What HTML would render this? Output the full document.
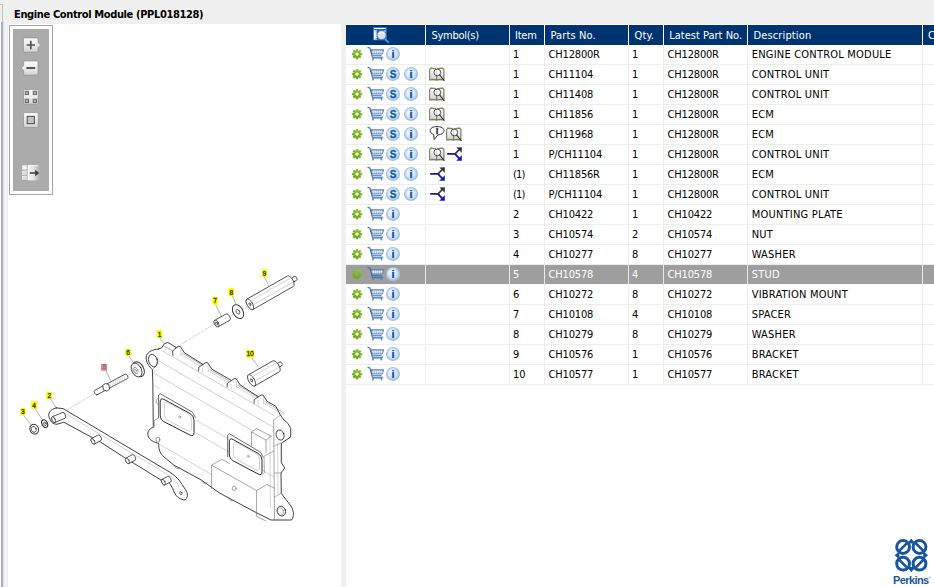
<!DOCTYPE html>
<html lang="en"><head><meta charset="utf-8"><title>Engine Control Module (PPL018128)</title>
<style>
html,body{margin:0;padding:0}
body{width:934px;height:587px;overflow:hidden;background:#f0f0f0;position:relative;font-family:"DejaVu Sans Condensed","Liberation Sans",sans-serif;font-size:11px;font-stretch:condensed;color:#000}
.defs{position:absolute;width:0;height:0;overflow:hidden}
.edge{position:absolute;left:0;top:21px;width:4px;height:566px;background:linear-gradient(to right,#fff 0,#fff 1.5px,#a9abc8 1.5px,#a9abc8 2.7px,#e2e3ef 2.7px,#e2e3ef 4px)}
.edge .tab{position:absolute;left:0;top:-17px;width:2px;height:17px;background:#f1f0e6;border-top:1px solid #c4c4c4;border-right:1px solid #c0c0c0}
.edge .vline{display:none}
.title{position:absolute;left:14px;top:8px;height:14px;line-height:14px;font-family:"DejaVu Sans Condensed","Liberation Sans",sans-serif;font-weight:bold;font-size:11px;letter-spacing:-0.37px;white-space:nowrap}
.left{position:absolute;left:8px;top:24px;width:333px;height:563px;background:#fff;overflow:hidden}
.right{position:absolute;left:346px;top:24px;width:588px;height:563px;background:#fff;overflow:hidden}
.thead{position:absolute;left:0;top:1px;width:588px;height:20px;background:#fff}
.th{position:absolute;top:0;height:20px;line-height:21px;background:#003471;color:#fff;white-space:nowrap;box-sizing:border-box;padding-left:5px;overflow:hidden}
.tr{position:absolute;left:0;width:588px;height:20px}
.td{position:absolute;top:0;height:19px;line-height:19px;white-space:nowrap;box-sizing:border-box;padding-left:3px;border-bottom:1px solid #ededed;height:20px;overflow:hidden}
.tr.sel .td{background:#9e9e9e;color:#fff;border-bottom-color:#fafafa}
.tr.sel{background:#e9e9e9}
.tr{background:#ededed}
.td{background:#fff}
.c0{left:0;width:79px}
.c1{left:80px;width:83px}
.c2{left:164px;width:34px}
.c3{left:199px;width:83px}
.c4{left:283px;width:34px}
.c5{left:318px;width:83px}
.c6{left:402px;width:174px}
.c7{left:577px;width:11px}
.ic{position:absolute;overflow:visible}
.hic{left:26px;top:1px}
.gear{left:5px;top:3px}
.cart{left:20.6px;top:1px}
.r1{left:39px;top:1px;opacity:0.999}
.r2{left:57px;top:1px;opacity:0.999}
.ts{font-family:"Liberation Sans",sans-serif;font-weight:bold;font-size:10px;fill:#0d5a9b;stroke:#0d5a9b;stroke-width:0.3px;text-anchor:middle}
.ti{font-family:"Liberation Sans",sans-serif;font-weight:bold;font-size:10.5px;fill:#2457a6;text-anchor:middle}
.tn{font-family:"Liberation Sans",sans-serif;font-weight:bold;font-size:9.6px;fill:#2a2a2a;stroke:#2a2a2a;stroke-width:0.4px;text-anchor:middle}
.tbframe{position:absolute;left:1px;top:1px;width:42px;height:168px;border:1px solid #a3a3a3;background:#fff}
.tbin{position:absolute;left:3px;top:3px;width:36px;height:162px;background:#ababab}
.tbsvg{position:absolute;left:0;top:0}
.dg{position:absolute;left:0;top:0}
.lb{font-family:"Liberation Sans",sans-serif;font-size:6.5px;text-anchor:middle;stroke-width:0.35px}
.logo{position:absolute;left:528px;top:503px}
.pk{font-family:"Liberation Sans",sans-serif;font-weight:bold;font-size:11px;letter-spacing:-0.6px;fill:#17569f}
.pkr{font-family:"Liberation Sans",sans-serif;font-size:3px;fill:#1a5aa2}
.th.c1{letter-spacing:-0.27px;padding-left:5.5px}
.th.c2{letter-spacing:-0.22px}
.th.c3{letter-spacing:0.12px;padding-left:5.5px}
.th.c4{letter-spacing:0.12px;padding-left:5.5px}
.th.c5{padding-left:5.3px}
.th.c6{letter-spacing:0.13px;padding-left:5.5px}
.td.c3,.td.c5{letter-spacing:-0.19px;padding-left:3.6px}
.td.c6{letter-spacing:0.21px;padding-left:3.7px}
.par{letter-spacing:-0.8px}
</style></head>
<body>
<svg class="defs" width="0" height="0" aria-hidden="true"><defs>
<radialGradient id="g-ball" cx="0.5" cy="0.5" r="0.5" fx="0.4" fy="0.36"><stop offset="0" stop-color="#f3f8fc"/><stop offset="0.5" stop-color="#dfebf7"/><stop offset="0.78" stop-color="#bcd6ef"/><stop offset="0.92" stop-color="#8fbbe3"/><stop offset="1" stop-color="#b7d2ec"/></radialGradient>
<linearGradient id="g-gear" gradientUnits="userSpaceOnUse" x1="0" y1="-5" x2="0" y2="5"><stop offset="0" stop-color="#8fc53a"/><stop offset="1" stop-color="#6da11b"/></linearGradient>
<linearGradient id="g-page" x1="0" y1="0" x2="0" y2="1"><stop offset="0" stop-color="#ffffff"/><stop offset="1" stop-color="#cfcfcf"/></linearGradient>
<symbol id="i-ball" viewBox="0 0 16 16"><circle cx="8" cy="8" r="7.05" fill="url(#g-ball)"/></symbol>
<symbol id="i-gear" viewBox="0 0 13 12"><g transform="translate(6 6.1)"><g fill="url(#g-gear)"><rect x="-1.2" y="-5.15" width="2.4" height="2.6" rx="0.45"/><rect x="-1.2" y="2.55" width="2.4" height="2.6" rx="0.45"/><rect x="-5.15" y="-1.2" width="2.6" height="2.4" rx="0.45"/><rect x="2.55" y="-1.2" width="2.6" height="2.4" rx="0.45"/><g transform="rotate(45)"><rect x="-1.2" y="-5.15" width="2.4" height="2.6" rx="0.45"/><rect x="-1.2" y="2.55" width="2.4" height="2.6" rx="0.45"/><rect x="-5.15" y="-1.2" width="2.6" height="2.4" rx="0.45"/><rect x="2.55" y="-1.2" width="2.6" height="2.4" rx="0.45"/></g></g><circle r="2.65" fill="none" stroke="url(#g-gear)" stroke-width="2.1"/></g></symbol>
<symbol id="i-cart" viewBox="0 0 18 16"><polygon points="3.5,3.7 16.8,3.7 15.3,8 4.9,8" fill="#86a2cc" stroke="#4a74ad" stroke-width="0.75" stroke-linejoin="round"/><path d="M6.3 4.3V7.6M8.3 4.3V7.6M10.3 4.3V7.6M12.3 4.3V7.6M14.3 4.3V7.6M4.4 5.9H16" stroke="#f2f6fb" stroke-width="0.8" fill="none"/><path d="M1 1.4 L2.9 2 L5.4 11.3 L15.7 11.3" fill="none" stroke="#3b66a0" stroke-width="1.05" stroke-linecap="round" stroke-linejoin="round"/><path d="M5.4 9.6 H14.6" stroke="#3b66a0" stroke-width="0.8" fill="none"/><path d="M6 12.3 H14.6" stroke="#4a8fe0" stroke-width="0.8" fill="none"/><path d="M5.6 11.4 L5.9 12.8 M15 11.4 L14.5 12.8" stroke="#3b66a0" stroke-width="0.9" fill="none"/><circle cx="5.9" cy="13.5" r="0.95" fill="#4a8fe0"/><circle cx="14.4" cy="13.5" r="0.95" fill="#4a8fe0"/></symbol>
<symbol id="i-book" viewBox="0 0 18 17"><path d="M1.1 3.2 L2.6 1.3 L7.6 1.9 L8.7 3 L9.8 1.9 L14.9 1.3 L16.4 3.2 L16.4 14.6 L1.1 14.6 Z" fill="#a09e62"/><path d="M1.7 3.3 C3.6 2 6.6 2.1 8.7 3.6 L8.7 14.1 C6.6 13.1 3.6 13.1 1.7 13.9 Z" fill="url(#g-page)" stroke="#55554a" stroke-width="0.65"/><path d="M8.7 3.6 C10.8 2.1 13.8 2 15.8 3.3 L15.8 13.9 C13.8 13.1 10.8 13.1 8.7 14.1 Z" fill="url(#g-page)" stroke="#55554a" stroke-width="0.65"/><circle cx="9.3" cy="6.4" r="3.4" fill="#fff" fill-opacity="0.7" stroke="#3a3a3a" stroke-width="0.9"/><path d="M11.7 9 L16.1 14.5" stroke="#2a2a2a" stroke-width="1.15" stroke-linecap="round"/></symbol>
<symbol id="i-note" viewBox="0 0 17 17"><path d="M9 1.5 C5 1.5 2.1 3.2 2.1 5.6 C2.1 7.3 3.5 8.7 5.6 9.4 L6.2 14.6 L9.8 9.9 C13.4 9.7 16 7.9 16 5.6 C16 3.2 13 1.5 9 1.5 Z" fill="#fff" stroke="#33332a" stroke-width="1" stroke-linejoin="round"/></symbol>
<symbol id="i-split" viewBox="0 0 18 17"><path d="M1.2 7.9 H9.2" stroke="#15186e" stroke-width="1.7" fill="none"/><path d="M9 8 L13.6 3.2" stroke="#3a3a3a" stroke-width="1.8" fill="none"/><path d="M10.4 1.4 L15.8 1.2 L15.8 6.7 Z" fill="#333"/><path d="M9 7.8 L13.6 12.8" stroke="#15188e" stroke-width="1.8" fill="none"/><path d="M15.8 9.2 L15.8 14.8 L10.2 14.8 Z" fill="#0a18dc"/></symbol>
<symbol id="i-find" viewBox="0 0 18 18"><rect x="1.5" y="1.6" width="12.7" height="12.2" fill="#1f64b4" stroke="#2f7fd0" stroke-width="0.9"/><path d="M2 2.5 H13.7" stroke="#ffffff" stroke-width="1"/><rect x="2" y="4.2" width="2.9" height="9.4" fill="#fff"/><path d="M4.2 4.8 V13.4" stroke="#2a6fc0" stroke-width="1.1" stroke-dasharray="0.9 0.9"/><rect x="12.2" y="4.4" width="1.4" height="1.5" fill="#f4f8fd"/><circle cx="9.6" cy="9.1" r="4.5" fill="#dcdfe4" stroke="#2c72c4" stroke-width="0.6"/><path d="M6.8 8 C8.2 6.2 11 6.2 12.4 8" stroke="#f6f7f9" stroke-width="1.4" fill="none"/><path d="M12.9 13.2 L16.3 16.2" stroke="#3f7fd0" stroke-width="2.1" stroke-linecap="round"/><path d="M13.4 13 L16.4 15.6" stroke="#cfe0f5" stroke-width="0.6" stroke-dasharray="0.8 0.8"/></symbol>
</defs></svg>
<div class="edge"><div class="tab"></div><div class="vline"></div></div>
<div class="title">Engine Control Module (PPL018128)</div>
<div class="left">
<div class="tbframe"><div class="tbin"></div></div>
<svg class="tbsvg" width="60" height="180" viewBox="8 24 60 180">
<defs><linearGradient id="g-btn" x1="0" y1="0" x2="0" y2="1"><stop offset="0" stop-color="#fbfbfb"/><stop offset="0.5" stop-color="#ececec"/><stop offset="1" stop-color="#d2d2d2"/></linearGradient>
<linearGradient id="g-exp" x1="0" y1="0" x2="1" y2="0"><stop offset="0" stop-color="#f4f4f4"/><stop offset="0.45" stop-color="#e6e6e6"/><stop offset="1" stop-color="#ababab"/></linearGradient></defs>
<g stroke="#8e8e8e" stroke-width="0.7">
<path d="M24.4 37.9 H37 a1 1 0 0 1 1 1 V42.4 L40.6 45 L38 47.6 V51.1 a1 1 0 0 1 -1 1 H24.4 a1 1 0 0 1 -1 -1 V38.9 a1 1 0 0 1 1 -1 Z" fill="url(#g-btn)"/>
<path d="M37 61 H24.6 a1 1 0 0 0 -1 1 V65.4 L21.2 68 L23.6 70.6 V74.1 a1 1 0 0 0 1 1 H37 a1 1 0 0 0 1 -1 V62 a1 1 0 0 0 -1 -1 Z" fill="url(#g-btn)"/>
<rect x="23.6" y="89.4" width="14.6" height="14.8" rx="1" fill="url(#g-btn)"/>
<rect x="23.6" y="112.6" width="14.6" height="14.8" rx="1" fill="url(#g-btn)"/>
</g>
<path d="M26.6 45 H35 M30.8 40.8 V49.2" stroke="#505050" stroke-width="1.7" fill="none"/>
<path d="M26.4 68 H35.2" stroke="#505050" stroke-width="1.9" fill="none"/>
<g fill="#a9a9a9" stroke="#636363" stroke-width="0.9"><rect x="25.2" y="91.2" width="3.4" height="3.4"/><rect x="33.2" y="91.2" width="3.4" height="3.4"/><rect x="25.2" y="99.2" width="3.4" height="3.4"/><rect x="33.2" y="99.2" width="3.4" height="3.4"/></g>
<rect x="27.2" y="116.4" width="7.2" height="7.2" fill="#c4c4c4" stroke="#555" stroke-width="1.1"/>
<rect x="27.6" y="165.2" width="12.4" height="15.2" fill="url(#g-exp)"/>
<rect x="22" y="165.2" width="5.6" height="15.2" fill="#8f8f8f"/>
<g fill="#dcdcdc"><rect x="22.6" y="165.6" width="4.3" height="4.2"/><rect x="22.6" y="170.9" width="4.3" height="4.1"/><rect x="22.6" y="176" width="4.3" height="4.1"/></g>
<rect x="23.2" y="166.2" width="3.1" height="3" fill="#fbfbfb"/>
<path d="M22.5 169.8 V165.6 H26.9 M22.5 175 V170.9 H26.9 M22.5 180.1 V176 H26.9" stroke="#fff" stroke-width="0.7" fill="none"/>
<path d="M28 180.2 V165.6 H38" stroke="#fdfdfd" stroke-width="0.9" fill="none"/>
<path d="M29.8 173 H36.4" stroke="#3d3d3d" stroke-width="1.5" fill="none"/><path d="M35.2 169.8 L39.2 173 L35.2 176.2 Z" fill="#3d3d3d"/>
</svg>
<svg class="dg" width="333" height="563" viewBox="8 24 333 563">
<g stroke-linecap="round" stroke-linejoin="round">
<path d="M213 325 L181 344.4" stroke="#a8a8a8" stroke-width="0.5" fill="none" stroke-dasharray="9 2 2 2"/>
<path d="M230.5 316 L233.5 314.2 M242.5 309 L247 306.4" stroke="#a8a8a8" stroke-width="0.5" fill="none"/>
<path d="M143 366 L151 361.5" stroke="#a8a8a8" stroke-width="0.5" fill="none"/>
<path d="M127.5 375.6 L131.5 373.2" stroke="#a8a8a8" stroke-width="0.5" fill="none"/>
<path d="M94 393.6 L67.2 410" stroke="#a8a8a8" stroke-width="0.5" fill="none" stroke-dasharray="9 2 2 2"/>
<path d="M38.5 427 L41.5 425.3 M47.5 422.2 L50 420.8" stroke="#a8a8a8" stroke-width="0.5" fill="none"/>
<path d="M246.5 383 L241 386.4" stroke="#a8a8a8" stroke-width="0.5" fill="none"/>
<path d="M160 338 L164.5 343.8" stroke="#6a6a6a" stroke-width="0.5" fill="none"/>
<path d="M50.5 398.7 L56.3 407.9" stroke="#6a6a6a" stroke-width="0.5" fill="none"/>
<path d="M23.6 415.2 L31 424.6" stroke="#6a6a6a" stroke-width="0.5" fill="none"/>
<path d="M35.2 408.9 L42.6 420" stroke="#6a6a6a" stroke-width="0.5" fill="none"/>
<path d="M105.9 370.6 L110.5 380.3" stroke="#6a6a6a" stroke-width="0.5" fill="none"/>
<path d="M128.9 355.8 L133 362" stroke="#6a6a6a" stroke-width="0.5" fill="none"/>
<path d="M215.6 304.8 L221.4 316.2" stroke="#6a6a6a" stroke-width="0.5" fill="none"/>
<path d="M232.4 296.2 L236.6 305" stroke="#6a6a6a" stroke-width="0.5" fill="none"/>
<path d="M264.7 277.2 L268.3 285.6" stroke="#6a6a6a" stroke-width="0.5" fill="none"/>
<path d="M251.6 357.8 L258.8 367.3" stroke="#6a6a6a" stroke-width="0.5" fill="none"/>
<path d="M158.4 349.1 C152 349.3 146.3 352.6 146.1 357.4 C146 362 149.2 366.6 152.3 369.5 L152.8 381 L153.3 427.4 C150 428.2 147.7 430.6 147.8 434 C148 438.4 152 441.8 157.4 443 L158.7 443.4 C158.6 450 160.2 453.4 164 457 L174 465.2 L201.3 480 L220 493.3 L256.6 512.8 L271 520 L291.5 520 C294.2 517 294.2 511 291 506 L284 497 L281.3 493.3 L281 473 L284.7 468 L281.3 462.6 L281.3 443.2 L290.7 437 L290.7 428.5 C289 424.2 286.2 421.2 283.9 420 L280 414.5 L275.9 406.3 L267.2 401.4 L263.0 395.0 L261.0 395.0 L258.4 396.8 L240.3 385.09999999999997 L236.10000000000002 378.7 L234.10000000000002 378.7 L231.5 380.5 L211.8 369.09999999999997 L207.60000000000002 362.7 L205.60000000000002 362.7 L203.0 364.5 L184.5 352.8 L180.3 346.40000000000003 L178.3 346.40000000000003 L175.7 348.20000000000005 L176.1 347.4 L167.9 342.5 L164.5 343.6 L161.8 347.7 L158.4 349.1 Z" stroke="#2a2a2a" stroke-width="0.9" fill="#fff"/>
<ellipse cx="153" cy="360.6" rx="4.3" ry="6.4" transform="rotate(-18 153 360.6)" stroke="#2a2a2a" stroke-width="0.8" fill="#fff"/>
<ellipse cx="280.1" cy="435" rx="3.9" ry="5.2" transform="rotate(-20 280.1 435)" stroke="#2a2a2a" stroke-width="0.8" fill="#fff"/>
<ellipse cx="281.3" cy="511.1" rx="4.2" ry="5" transform="rotate(-20 281.3 511.1)" stroke="#2a2a2a" stroke-width="0.8" fill="#fff"/>
<ellipse cx="280.6" cy="511.5" rx="2.9" ry="3.7" transform="rotate(-20 280.6 511.5)" stroke="#6a6a6a" stroke-width="0.5" fill="none"/>
<ellipse cx="157.9" cy="439.8" rx="2" ry="2.6" stroke="#6a6a6a" stroke-width="0.7" fill="#fff"/>
<path d="M152.3 369.5 C155 368 157.4 364 157.6 358" stroke="#6a6a6a" stroke-width="0.6" fill="none"/>
<path d="M175.8 348.2 L172.6 351 L172.8 355.4" stroke="#2a2a2a" stroke-width="0.8" fill="none"/>
<path d="M163.8 346.2 L173 350.9" stroke="#6a6a6a" stroke-width="0.55" fill="none"/>
<path d="M180.7 349.1 L180.9 355.3" stroke="#a8a8a8" stroke-width="0.5" fill="none"/>
<path d="M182.2 352.9 L201.8 364.9" stroke="#6a6a6a" stroke-width="0.5" fill="none"/>
<path d="M180.9 354.3 L199.5 365.7" stroke="#a8a8a8" stroke-width="0.5" fill="none"/>
<path d="M203.0 364.5 L198.8 367.2 L198.6 371.0" stroke="#2a2a2a" stroke-width="0.8" fill="none"/>
<path d="M202.6 368.0 L202.8 372.6" stroke="#a8a8a8" stroke-width="0.5" fill="none"/>
<path d="M208.0 365.4 L208.2 371.6" stroke="#a8a8a8" stroke-width="0.5" fill="none"/>
<path d="M209.5 369.2 L229.1 381.2" stroke="#6a6a6a" stroke-width="0.5" fill="none"/>
<path d="M208.2 370.6 L226.8 382.0" stroke="#a8a8a8" stroke-width="0.5" fill="none"/>
<path d="M231.5 380.5 L227.3 383.2 L227.1 387.0" stroke="#2a2a2a" stroke-width="0.8" fill="none"/>
<path d="M231.1 384.0 L231.3 388.6" stroke="#a8a8a8" stroke-width="0.5" fill="none"/>
<path d="M236.5 381.4 L236.7 387.6" stroke="#a8a8a8" stroke-width="0.5" fill="none"/>
<path d="M238.0 385.2 L257.6 397.2" stroke="#6a6a6a" stroke-width="0.5" fill="none"/>
<path d="M236.7 386.6 L255.3 398.0" stroke="#a8a8a8" stroke-width="0.5" fill="none"/>
<path d="M258.4 396.8 L254.2 399.5 L254.0 403.3" stroke="#2a2a2a" stroke-width="0.8" fill="none"/>
<path d="M258.0 400.3 L258.2 404.9" stroke="#a8a8a8" stroke-width="0.5" fill="none"/>
<path d="M263.4 397.7 L263.6 403.9" stroke="#a8a8a8" stroke-width="0.5" fill="none"/>
<path d="M264.9 401.5 L284.5 413.5" stroke="#6a6a6a" stroke-width="0.5" fill="none"/>
<path d="M263.6 402.9 L282.2 414.3" stroke="#a8a8a8" stroke-width="0.5" fill="none"/>
<path d="M161.8 350.6 L273.4 415.2" stroke="#a8a8a8" stroke-width="0.55" fill="none"/>
<path d="M158.4 360.7 L273.6 427.4" stroke="#a8a8a8" stroke-width="0.55" fill="none"/>
<path d="M153.6 372.9 L252 430.4" stroke="#a8a8a8" stroke-width="0.55" fill="none"/>
<path d="M153.4 385 L160 389" stroke="#a8a8a8" stroke-width="0.5" fill="none"/>
<path d="M196 420 L229 439.2" stroke="#a8a8a8" stroke-width="0.5" fill="none"/>
<path d="M196 433 L229.4 452.4" stroke="#a8a8a8" stroke-width="0.5" fill="none"/>
<path d="M158.9 444 L211.6 474.6" stroke="#a8a8a8" stroke-width="0.5" fill="none"/>
<path d="M262 470 L274 477" stroke="#a8a8a8" stroke-width="0.5" fill="none"/>
<path d="M273.7 420 L274.5 519.6" stroke="#6a6a6a" stroke-width="0.6" fill="none"/>
<path d="M277.6 444 L278 494" stroke="#a8a8a8" stroke-width="0.5" fill="none"/>
<path d="M270 436 L270.4 508" stroke="#a8a8a8" stroke-width="0.45" fill="none"/>
<path d="M273.7 420 L281 414.8" stroke="#6a6a6a" stroke-width="0.5" fill="none"/>
<path d="M273.9 446 L281.3 443.2" stroke="#6a6a6a" stroke-width="0.5" fill="none"/>
<path d="M274.3 497 L281.3 493.3 M274.3 473 L281 473" stroke="#6a6a6a" stroke-width="0.5" fill="none"/>
<path d="M251.5 445.6 L251.5 431.9 L256.6 428.5 L271.1 436.2 M251.5 431.9 L266 440.2 L271.1 436.2 M266 440.2 L266 452" stroke="#6a6a6a" stroke-width="0.6" fill="none"/>
<path d="M211.6 488.6 L211.6 465.2 L221.8 459.2 L229.4 463.4 M211.6 465.2 L256.6 490.6 L256.6 512.8 M256.6 490.6 L267 484.5 L274.2 488" stroke="#6a6a6a" stroke-width="0.6" fill="none"/>
<path d="M174.8 465.6 C174.6 468.4 178.8 469.8 180 467.6" stroke="#6a6a6a" stroke-width="0.6" fill="none"/>
<path d="M201.8 480.4 C201.6 483.2 205.8 484.6 207 482.4" stroke="#6a6a6a" stroke-width="0.6" fill="none"/>
<path d="M229 497.8 C228.8 500.6 233 502 234.2 499.8" stroke="#6a6a6a" stroke-width="0.6" fill="none"/>
<ellipse cx="234.2" cy="488.4" rx="1.9" ry="2.3" stroke="#6a6a6a" stroke-width="0.6" fill="#fff"/>
<path d="M256.6 512.8 L256.6 516.4 L266 521" stroke="#6a6a6a" stroke-width="0.6" fill="none"/>
<path d="M160.2 401.9 Q160.2 397.3 164.2 399.5 L190.0 413.5 Q194.0 415.7 194.0 420.3 L194.0 432.5 Q194.0 437.1 189.9 435.0 L164.3 421.9 Q160.2 419.8 160.2 415.2 Z" stroke="#2a2a2a" stroke-width="1.0" fill="#fff"/>
<path d="M164.4 404.9 Q164.4 400.7 168.0 402.7 L187.8 413.5 Q191.4 415.5 191.4 419.6 L191.4 428.4 Q191.4 432.6 187.7 430.7 L168.1 420.6 Q164.4 418.7 164.4 414.6 Z" stroke="#a8a8a8" stroke-width="0.55" fill="none"/>
<circle cx="179.7" cy="416.9" r="1.1" stroke="#6a6a6a" stroke-width="0.5" fill="none"/>
<path d="M158.6 417.8 L158.6 395.1 L160.2 393.7 L192.6 412.3 L195.2 417.3" stroke="#2a2a2a" stroke-width="0.7" fill="none"/>
<path d="M229.3 441.9 Q229.3 437.3 233.3 439.6 L258.0 453.4 Q262.0 455.7 262.0 460.3 L262.0 471.5 Q262.0 476.1 257.9 473.9 L233.4 460.9 Q229.3 458.7 229.3 454.1 Z" stroke="#2a2a2a" stroke-width="1.0" fill="#fff"/>
<path d="M233.4 444.8 Q233.4 440.6 237.0 442.7 L255.9 453.3 Q259.5 455.3 259.5 459.5 L259.5 467.5 Q259.5 471.7 255.9 469.7 L237.0 459.7 Q233.4 457.7 233.4 453.6 Z" stroke="#a8a8a8" stroke-width="0.55" fill="none"/>
<circle cx="248.2" cy="456.3" r="1.1" stroke="#6a6a6a" stroke-width="0.5" fill="none"/>
<path d="M227.7 456.7 L227.7 435.1 L229.3 433.7 L260.6 452.3 L263.2 457.3" stroke="#2a2a2a" stroke-width="0.7" fill="none"/>
<path d="M158.6 417.8 L154.4 420.4 L154.2 427" stroke="#6a6a6a" stroke-width="0.6" fill="none"/>
<path d="M158.4 398.4 C155.4 398.4 155 404 158.4 404.6" stroke="#6a6a6a" stroke-width="0.6" fill="none"/>
<path d="M261.7 474.5 L264.4 473 L264 456.4 L273.8 451" stroke="#6a6a6a" stroke-width="0.55" fill="none"/>
<path d="M294.5 281.5 L296.7 280.2 A1.32 2.20 -30.6 0 0 294.5 276.4 L292.3 277.7 A1.32 2.20 -30.6 0 0 294.5 281.5 Z" stroke="#2a2a2a" stroke-width="0.8" fill="#fff"/>
<path d="M252.9 309.5 L293.4 286.4 A2.70 6.00 -29.7 0 0 287.4 276.0 L246.9 299.1 A2.70 6.00 -29.7 0 0 252.9 309.5 Z" stroke="#2a2a2a" stroke-width="0.8" fill="#fff"/>
<ellipse cx="249.9" cy="304.3" rx="2.70" ry="6.00" transform="rotate(-29.7 249.9 304.3)" stroke="#2a2a2a" stroke-width="0.68" fill="#fff"/>
<ellipse cx="249.9" cy="304.3" rx="0.77" ry="1.70" transform="rotate(-29.7 249.9 304.3)" stroke="#2a2a2a" stroke-width="0.64" fill="#fff"/>
<path d="M250.4 300.9 L290.5 278.1" stroke="#a8a8a8" stroke-width="0.5" fill="none"/>
<path d="M252.8 305.1 L292.8 282.2" stroke="#a8a8a8" stroke-width="0.5" fill="none"/>
<ellipse cx="238" cy="311.6" rx="4.9" ry="7.5" transform="rotate(-30 238 311.6)" stroke="#2a2a2a" stroke-width="0.9" fill="#fff"/>
<ellipse cx="237.9" cy="311.8" rx="1.6" ry="2.5" transform="rotate(-30 237.9 311.8)" stroke="#2a2a2a" stroke-width="0.7" fill="#fff"/>
<path d="M218.3 326.7 L229.8 320.3 A2.04 3.70 -29.1 0 0 226.2 313.9 L214.7 320.3 A2.04 3.70 -29.1 0 0 218.3 326.7 Z" stroke="#2a2a2a" stroke-width="0.8" fill="#fff"/>
<ellipse cx="216.5" cy="323.5" rx="2.04" ry="3.70" transform="rotate(-29.1 216.5 323.5)" stroke="#2a2a2a" stroke-width="0.68" fill="#fff"/>
<ellipse cx="216.5" cy="323.5" rx="0.88" ry="1.60" transform="rotate(-29.1 216.5 323.5)" stroke="#2a2a2a" stroke-width="0.64" fill="#fff"/>
<path d="M280.0 366.6 L282.0 365.5 A1.26 2.10 -28.8 0 0 280.0 361.9 L278.0 363.0 A1.26 2.10 -28.8 0 0 280.0 366.6 Z" stroke="#2a2a2a" stroke-width="0.8" fill="#fff"/>
<path d="M254.8 385.9 L279.5 371.7 A2.88 6.40 -29.9 0 0 273.1 360.7 L248.4 374.9 A2.88 6.40 -29.9 0 0 254.8 385.9 Z" stroke="#2a2a2a" stroke-width="0.8" fill="#fff"/>
<ellipse cx="251.6" cy="380.4" rx="2.88" ry="6.40" transform="rotate(-29.9 251.6 380.4)" stroke="#2a2a2a" stroke-width="0.68" fill="#fff"/>
<ellipse cx="251.6" cy="380.4" rx="0.77" ry="1.70" transform="rotate(-29.9 251.6 380.4)" stroke="#2a2a2a" stroke-width="0.64" fill="#fff"/>
<path d="M252.2 376.8 L276.4 362.8" stroke="#a8a8a8" stroke-width="0.5" fill="none"/>
<path d="M254.7 381.2 L278.9 367.3" stroke="#a8a8a8" stroke-width="0.5" fill="none"/>
<ellipse cx="138.4" cy="369.2" rx="5.2" ry="8" transform="rotate(-28 138.4 369.2)" stroke="#2a2a2a" stroke-width="0.9" fill="#fff"/>
<ellipse cx="136.6" cy="370" rx="4.8" ry="7.4" transform="rotate(-28 136.6 370)" stroke="#2a2a2a" stroke-width="0.8" fill="#fff"/>
<ellipse cx="135.6" cy="370.6" rx="2.3" ry="3.4" transform="rotate(-28 135.6 370.6)" stroke="#6a6a6a" stroke-width="0.6" fill="#fff"/>
<ellipse cx="135.2" cy="370.8" rx="1.1" ry="1.7" transform="rotate(-28 135.2 370.8)" stroke="#6a6a6a" stroke-width="0.5" fill="#fff"/>
<path d="M109.4 388.2 L127.6 378.5 A1.25 2.50 -28.1 0 0 125.2 374.1 L107.0 383.8 A1.25 2.50 -28.1 0 0 109.4 388.2 Z" stroke="#2a2a2a" stroke-width="0.8" fill="#fff"/>
<path d="M97.0 394.8 L105.2 390.4 A1.25 2.50 -28.2 0 0 102.8 386.0 L94.6 390.4 A1.25 2.50 -28.2 0 0 97.0 394.8 Z" stroke="#2a2a2a" stroke-width="0.8" fill="#fff"/>
<path d="M103 385.2 L105.6 383.4 L108.8 384.6 L109.6 389.2 L107 391.2 L103.8 390 Z" stroke="#2a2a2a" stroke-width="0.8" fill="#fff"/>
<path d="M110.0 383.3 L111.2 387.1" stroke="#a8a8a8" stroke-width="0.4" fill="none"/>
<path d="M111.7 382.4 L112.9 386.2" stroke="#a8a8a8" stroke-width="0.4" fill="none"/>
<path d="M113.4 381.5 L114.6 385.3" stroke="#a8a8a8" stroke-width="0.4" fill="none"/>
<path d="M115.2 380.5 L116.4 384.3" stroke="#a8a8a8" stroke-width="0.4" fill="none"/>
<path d="M116.9 379.6 L118.1 383.4" stroke="#a8a8a8" stroke-width="0.4" fill="none"/>
<path d="M118.6 378.7 L119.8 382.5" stroke="#a8a8a8" stroke-width="0.4" fill="none"/>
<path d="M120.3 377.8 L121.5 381.6" stroke="#a8a8a8" stroke-width="0.4" fill="none"/>
<path d="M122.1 376.8 L123.3 380.6" stroke="#a8a8a8" stroke-width="0.4" fill="none"/>
<path d="M123.8 375.9 L125.0 379.7" stroke="#a8a8a8" stroke-width="0.4" fill="none"/>
<ellipse cx="34.2" cy="429.2" rx="4.3" ry="5" transform="rotate(-25 34.2 429.2)" stroke="#2a2a2a" stroke-width="0.9" fill="#fff"/>
<ellipse cx="33.8" cy="429.4" rx="2.4" ry="3" transform="rotate(-25 33.8 429.4)" stroke="#2a2a2a" stroke-width="0.7" fill="#fff"/>
<ellipse cx="44.7" cy="423.7" rx="2.7" ry="4" transform="rotate(-25 44.7 423.7)" stroke="#2a2a2a" stroke-width="1.1" fill="#fff"/>
<ellipse cx="44.9" cy="423.8" rx="1.1" ry="1.9" transform="rotate(-25 44.9 423.8)" stroke="#2a2a2a" stroke-width="0.7" fill="#fff"/>
<path d="M56.3 407.9 L63.1 408.6 L169.8 472.2 C176 476 180 481 182 484.4 C184.6 488.6 187 491 187.4 493.8 C187.8 498 185.6 500.4 183.4 499.8 C180.4 499 177.6 497.6 175.9 495.2 C173.6 492 173.2 489 171.3 486 C170 483.8 168.8 482.4 167.5 481.4 L160.6 479.8 L134.5 463.7 L124.5 457.6 L100.7 442.2 L63.8 422.2 L57 424.3 C53.6 424.2 51.4 422.6 50.9 420.9 C49.6 418.4 48.4 416.4 48.8 414.1 C49.4 411 52.4 408.6 56.3 407.9 Z" stroke="#2a2a2a" stroke-width="0.9" fill="#fff"/>
<path d="M60 410.4 L168 474.6 C173.4 478 177 482.4 179.2 486.6" stroke="#a8a8a8" stroke-width="0.5" fill="none"/>
<ellipse cx="180.9" cy="493.2" rx="1.1" ry="1.6" transform="rotate(-25 180.9 493.2)" stroke="#2a2a2a" stroke-width="0.6" fill="#fff"/>
<path d="M54.8 422.5 L65.0 418.3 A1.55 3.10 -22.4 0 0 62.6 412.5 L52.4 416.7 A1.55 3.10 -22.4 0 0 54.8 422.5 Z" stroke="#2a2a2a" stroke-width="0.8" fill="#fff"/>
<ellipse cx="53.6" cy="419.6" rx="1.55" ry="3.10" transform="rotate(-22.4 53.6 419.6)" stroke="#2a2a2a" stroke-width="0.68" fill="#fff"/>
<path d="M94.5 444.1 L101.1 440.3 A1.55 3.10 -29.9 0 0 98.1 434.9 L91.5 438.7 A1.55 3.10 -29.9 0 0 94.5 444.1 Z" stroke="#2a2a2a" stroke-width="0.8" fill="#fff"/>
<ellipse cx="93.0" cy="441.4" rx="1.55" ry="3.10" transform="rotate(-29.9 93.0 441.4)" stroke="#2a2a2a" stroke-width="0.68" fill="#fff"/>
<path d="M128.9 463.5 L135.3 460.1 A1.55 3.10 -28.0 0 0 132.3 454.7 L125.9 458.1 A1.55 3.10 -28.0 0 0 128.9 463.5 Z" stroke="#2a2a2a" stroke-width="0.8" fill="#fff"/>
<ellipse cx="127.4" cy="460.8" rx="1.55" ry="3.10" transform="rotate(-28.0 127.4 460.8)" stroke="#2a2a2a" stroke-width="0.68" fill="#fff"/>
<path d="M164.8 485.0 L170.6 482.0 A1.55 3.10 -27.3 0 0 167.8 476.4 L162.0 479.4 A1.55 3.10 -27.3 0 0 164.8 485.0 Z" stroke="#2a2a2a" stroke-width="0.8" fill="#fff"/>
<ellipse cx="163.4" cy="482.2" rx="1.55" ry="3.10" transform="rotate(-27.3 163.4 482.2)" stroke="#2a2a2a" stroke-width="0.68" fill="#fff"/>
</g>
<rect x="156.7" y="329.9" width="5.6" height="8.1" fill="#ffff00"/>
<text x="159.5" y="336.6" class="lb" fill="#3c3c3c" stroke="#3c3c3c">1</text>
<rect x="46.1" y="392" width="6.2" height="7" fill="#ffff00"/>
<text x="49.2" y="397.6" class="lb" fill="#3c3c3c" stroke="#3c3c3c">2</text>
<rect x="20.2" y="407.9" width="5.3" height="7.4" fill="#ffff00"/>
<text x="22.8" y="413.9" class="lb" fill="#3c3c3c" stroke="#3c3c3c">3</text>
<rect x="31.1" y="401.1" width="6" height="7.8" fill="#ffff00"/>
<text x="34.1" y="407.5" class="lb" fill="#3c3c3c" stroke="#3c3c3c">4</text>
<rect x="101.1" y="364" width="6" height="6.8" fill="#f08080"/>
<text x="104.1" y="369.4" class="lb" fill="#7d7d7d" stroke="#7d7d7d">5</text>
<rect x="125" y="349" width="6.2" height="6.9" fill="#ffff00"/>
<text x="128.1" y="354.5" class="lb" fill="#3c3c3c" stroke="#3c3c3c">6</text>
<rect x="212.3" y="297" width="5.6" height="7.8" fill="#ffff00"/>
<text x="215.1" y="303.4" class="lb" fill="#3c3c3c" stroke="#3c3c3c">7</text>
<rect x="228.2" y="288.1" width="6" height="8.1" fill="#ffff00"/>
<text x="231.2" y="294.8" class="lb" fill="#3c3c3c" stroke="#3c3c3c">8</text>
<rect x="261.6" y="269" width="5.6" height="8.2" fill="#ffff00"/>
<text x="264.4" y="275.8" class="lb" fill="#3c3c3c" stroke="#3c3c3c">9</text>
<rect x="246.1" y="349.9" width="8" height="7.9" fill="#ffff00"/>
<text x="250.1" y="356.4" class="lb" fill="#3c3c3c" stroke="#3c3c3c">10</text>
</svg>
</div>
<div class="right">
<div class="thead"><div class="th c0"><svg class="ic hic" width="18" height="18" viewBox="0 0 18 18"><use href="#i-find"/></svg></div><div class="th c1">Symbol(s)</div><div class="th c2">Item</div><div class="th c3">Parts No.</div><div class="th c4">Qty.</div><div class="th c5">Latest Part No.</div><div class="th c6">Description</div><div class="th c7">C</div></div>
<div class="tr" style="top:21px"><div class="td c0"><svg class="ic gear" width="13" height="12" viewBox="0 0 13 12"><use href="#i-gear"/></svg><svg class="ic cart" width="18" height="16" viewBox="0 0 18 16"><use href="#i-cart"/></svg><svg class="ic r1" width="16" height="16" viewBox="0 0 16 16"><use href="#i-ball"/><text class="ti" x="0" y="11.8" transform="translate(8.05 0) scale(1.4 1)">i</text></svg></div><div class="td c1"></div><div class="td c2">1</div><div class="td c3">CH12800R</div><div class="td c4">1</div><div class="td c5">CH12800R</div><div class="td c6">ENGINE CONTROL MODULE</div><div class="td c7"></div></div>
<div class="tr" style="top:41px"><div class="td c0"><svg class="ic gear" width="13" height="12" viewBox="0 0 13 12"><use href="#i-gear"/></svg><svg class="ic cart" width="18" height="16" viewBox="0 0 18 16"><use href="#i-cart"/></svg><svg class="ic r1" width="16" height="16" viewBox="0 0 16 16"><use href="#i-ball"/><text class="ts" x="8" y="11.6">S</text></svg><svg class="ic r2" width="16" height="16" viewBox="0 0 16 16"><use href="#i-ball"/><text class="ti" x="0" y="11.8" transform="translate(8.05 0) scale(1.4 1)">i</text></svg></div><div class="td c1"><svg class="ic" style="left:2px;top:1px" width="18" height="17" viewBox="0 0 18 17"><use href="#i-book"/></svg></div><div class="td c2">1</div><div class="td c3">CH11104</div><div class="td c4">1</div><div class="td c5">CH12800R</div><div class="td c6">CONTROL UNIT</div><div class="td c7"></div></div>
<div class="tr" style="top:61px"><div class="td c0"><svg class="ic gear" width="13" height="12" viewBox="0 0 13 12"><use href="#i-gear"/></svg><svg class="ic cart" width="18" height="16" viewBox="0 0 18 16"><use href="#i-cart"/></svg><svg class="ic r1" width="16" height="16" viewBox="0 0 16 16"><use href="#i-ball"/><text class="ts" x="8" y="11.6">S</text></svg><svg class="ic r2" width="16" height="16" viewBox="0 0 16 16"><use href="#i-ball"/><text class="ti" x="0" y="11.8" transform="translate(8.05 0) scale(1.4 1)">i</text></svg></div><div class="td c1"><svg class="ic" style="left:2px;top:1px" width="18" height="17" viewBox="0 0 18 17"><use href="#i-book"/></svg></div><div class="td c2">1</div><div class="td c3">CH11408</div><div class="td c4">1</div><div class="td c5">CH12800R</div><div class="td c6">CONTROL UNIT</div><div class="td c7"></div></div>
<div class="tr" style="top:81px"><div class="td c0"><svg class="ic gear" width="13" height="12" viewBox="0 0 13 12"><use href="#i-gear"/></svg><svg class="ic cart" width="18" height="16" viewBox="0 0 18 16"><use href="#i-cart"/></svg><svg class="ic r1" width="16" height="16" viewBox="0 0 16 16"><use href="#i-ball"/><text class="ts" x="8" y="11.6">S</text></svg><svg class="ic r2" width="16" height="16" viewBox="0 0 16 16"><use href="#i-ball"/><text class="ti" x="0" y="11.8" transform="translate(8.05 0) scale(1.4 1)">i</text></svg></div><div class="td c1"><svg class="ic" style="left:2px;top:1px" width="18" height="17" viewBox="0 0 18 17"><use href="#i-book"/></svg></div><div class="td c2">1</div><div class="td c3">CH11856</div><div class="td c4">1</div><div class="td c5">CH12800R</div><div class="td c6">ECM</div><div class="td c7"></div></div>
<div class="tr" style="top:101px"><div class="td c0"><svg class="ic gear" width="13" height="12" viewBox="0 0 13 12"><use href="#i-gear"/></svg><svg class="ic cart" width="18" height="16" viewBox="0 0 18 16"><use href="#i-cart"/></svg><svg class="ic r1" width="16" height="16" viewBox="0 0 16 16"><use href="#i-ball"/><text class="ts" x="8" y="11.6">S</text></svg><svg class="ic r2" width="16" height="16" viewBox="0 0 16 16"><use href="#i-ball"/><text class="ti" x="0" y="11.8" transform="translate(8.05 0) scale(1.4 1)">i</text></svg></div><div class="td c1"><svg class="ic" style="left:2px;top:0px;opacity:0.999" width="17" height="17" viewBox="0 0 17 17"><use href="#i-note"/><text class="tn" x="9" y="8.9">!</text></svg><svg class="ic" style="left:19px;top:1px" width="18" height="17" viewBox="0 0 18 17"><use href="#i-book"/></svg></div><div class="td c2">1</div><div class="td c3">CH11968</div><div class="td c4">1</div><div class="td c5">CH12800R</div><div class="td c6">ECM</div><div class="td c7"></div></div>
<div class="tr" style="top:121px"><div class="td c0"><svg class="ic gear" width="13" height="12" viewBox="0 0 13 12"><use href="#i-gear"/></svg><svg class="ic cart" width="18" height="16" viewBox="0 0 18 16"><use href="#i-cart"/></svg><svg class="ic r1" width="16" height="16" viewBox="0 0 16 16"><use href="#i-ball"/><text class="ts" x="8" y="11.6">S</text></svg><svg class="ic r2" width="16" height="16" viewBox="0 0 16 16"><use href="#i-ball"/><text class="ti" x="0" y="11.8" transform="translate(8.05 0) scale(1.4 1)">i</text></svg></div><div class="td c1"><svg class="ic" style="left:2px;top:1px" width="18" height="17" viewBox="0 0 18 17"><use href="#i-book"/></svg><svg class="ic" style="left:20px;top:1px" width="18" height="17" viewBox="0 0 18 17"><use href="#i-split"/></svg></div><div class="td c2">1</div><div class="td c3">P/CH11104</div><div class="td c4">1</div><div class="td c5">CH12800R</div><div class="td c6">CONTROL UNIT</div><div class="td c7"></div></div>
<div class="tr" style="top:141px"><div class="td c0"><svg class="ic gear" width="13" height="12" viewBox="0 0 13 12"><use href="#i-gear"/></svg><svg class="ic cart" width="18" height="16" viewBox="0 0 18 16"><use href="#i-cart"/></svg><svg class="ic r1" width="16" height="16" viewBox="0 0 16 16"><use href="#i-ball"/><text class="ts" x="8" y="11.6">S</text></svg><svg class="ic r2" width="16" height="16" viewBox="0 0 16 16"><use href="#i-ball"/><text class="ti" x="0" y="11.8" transform="translate(8.05 0) scale(1.4 1)">i</text></svg></div><div class="td c1"><svg class="ic" style="left:3px;top:1px" width="18" height="17" viewBox="0 0 18 17"><use href="#i-split"/></svg></div><div class="td c2 par">(1)</div><div class="td c3">CH11856R</div><div class="td c4">1</div><div class="td c5">CH12800R</div><div class="td c6">ECM</div><div class="td c7"></div></div>
<div class="tr" style="top:161px"><div class="td c0"><svg class="ic gear" width="13" height="12" viewBox="0 0 13 12"><use href="#i-gear"/></svg><svg class="ic cart" width="18" height="16" viewBox="0 0 18 16"><use href="#i-cart"/></svg><svg class="ic r1" width="16" height="16" viewBox="0 0 16 16"><use href="#i-ball"/><text class="ts" x="8" y="11.6">S</text></svg><svg class="ic r2" width="16" height="16" viewBox="0 0 16 16"><use href="#i-ball"/><text class="ti" x="0" y="11.8" transform="translate(8.05 0) scale(1.4 1)">i</text></svg></div><div class="td c1"><svg class="ic" style="left:3px;top:1px" width="18" height="17" viewBox="0 0 18 17"><use href="#i-split"/></svg></div><div class="td c2 par">(1)</div><div class="td c3">P/CH11104</div><div class="td c4">1</div><div class="td c5">CH12800R</div><div class="td c6">CONTROL UNIT</div><div class="td c7"></div></div>
<div class="tr" style="top:181px"><div class="td c0"><svg class="ic gear" width="13" height="12" viewBox="0 0 13 12"><use href="#i-gear"/></svg><svg class="ic cart" width="18" height="16" viewBox="0 0 18 16"><use href="#i-cart"/></svg><svg class="ic r1" width="16" height="16" viewBox="0 0 16 16"><use href="#i-ball"/><text class="ti" x="0" y="11.8" transform="translate(8.05 0) scale(1.4 1)">i</text></svg></div><div class="td c1"></div><div class="td c2">2</div><div class="td c3">CH10422</div><div class="td c4">1</div><div class="td c5">CH10422</div><div class="td c6">MOUNTING PLATE</div><div class="td c7"></div></div>
<div class="tr" style="top:201px"><div class="td c0"><svg class="ic gear" width="13" height="12" viewBox="0 0 13 12"><use href="#i-gear"/></svg><svg class="ic cart" width="18" height="16" viewBox="0 0 18 16"><use href="#i-cart"/></svg><svg class="ic r1" width="16" height="16" viewBox="0 0 16 16"><use href="#i-ball"/><text class="ti" x="0" y="11.8" transform="translate(8.05 0) scale(1.4 1)">i</text></svg></div><div class="td c1"></div><div class="td c2">3</div><div class="td c3">CH10574</div><div class="td c4">2</div><div class="td c5">CH10574</div><div class="td c6">NUT</div><div class="td c7"></div></div>
<div class="tr" style="top:221px"><div class="td c0"><svg class="ic gear" width="13" height="12" viewBox="0 0 13 12"><use href="#i-gear"/></svg><svg class="ic cart" width="18" height="16" viewBox="0 0 18 16"><use href="#i-cart"/></svg><svg class="ic r1" width="16" height="16" viewBox="0 0 16 16"><use href="#i-ball"/><text class="ti" x="0" y="11.8" transform="translate(8.05 0) scale(1.4 1)">i</text></svg></div><div class="td c1"></div><div class="td c2">4</div><div class="td c3">CH10277</div><div class="td c4">8</div><div class="td c5">CH10277</div><div class="td c6">WASHER</div><div class="td c7"></div></div>
<div class="tr sel" style="top:241px"><div class="td c0"><svg class="ic gear" width="13" height="12" viewBox="0 0 13 12"><use href="#i-gear"/></svg><svg class="ic cart" width="18" height="16" viewBox="0 0 18 16"><use href="#i-cart"/></svg><svg class="ic r1" width="16" height="16" viewBox="0 0 16 16"><use href="#i-ball"/><text class="ti" x="0" y="11.8" transform="translate(8.05 0) scale(1.4 1)">i</text></svg></div><div class="td c1"></div><div class="td c2">5</div><div class="td c3">CH10578</div><div class="td c4">4</div><div class="td c5">CH10578</div><div class="td c6">STUD</div><div class="td c7"></div></div>
<div class="tr" style="top:261px"><div class="td c0"><svg class="ic gear" width="13" height="12" viewBox="0 0 13 12"><use href="#i-gear"/></svg><svg class="ic cart" width="18" height="16" viewBox="0 0 18 16"><use href="#i-cart"/></svg><svg class="ic r1" width="16" height="16" viewBox="0 0 16 16"><use href="#i-ball"/><text class="ti" x="0" y="11.8" transform="translate(8.05 0) scale(1.4 1)">i</text></svg></div><div class="td c1"></div><div class="td c2">6</div><div class="td c3">CH10272</div><div class="td c4">8</div><div class="td c5">CH10272</div><div class="td c6">VIBRATION MOUNT</div><div class="td c7"></div></div>
<div class="tr" style="top:281px"><div class="td c0"><svg class="ic gear" width="13" height="12" viewBox="0 0 13 12"><use href="#i-gear"/></svg><svg class="ic cart" width="18" height="16" viewBox="0 0 18 16"><use href="#i-cart"/></svg><svg class="ic r1" width="16" height="16" viewBox="0 0 16 16"><use href="#i-ball"/><text class="ti" x="0" y="11.8" transform="translate(8.05 0) scale(1.4 1)">i</text></svg></div><div class="td c1"></div><div class="td c2">7</div><div class="td c3">CH10108</div><div class="td c4">4</div><div class="td c5">CH10108</div><div class="td c6">SPACER</div><div class="td c7"></div></div>
<div class="tr" style="top:301px"><div class="td c0"><svg class="ic gear" width="13" height="12" viewBox="0 0 13 12"><use href="#i-gear"/></svg><svg class="ic cart" width="18" height="16" viewBox="0 0 18 16"><use href="#i-cart"/></svg><svg class="ic r1" width="16" height="16" viewBox="0 0 16 16"><use href="#i-ball"/><text class="ti" x="0" y="11.8" transform="translate(8.05 0) scale(1.4 1)">i</text></svg></div><div class="td c1"></div><div class="td c2">8</div><div class="td c3">CH10279</div><div class="td c4">8</div><div class="td c5">CH10279</div><div class="td c6">WASHER</div><div class="td c7"></div></div>
<div class="tr" style="top:321px"><div class="td c0"><svg class="ic gear" width="13" height="12" viewBox="0 0 13 12"><use href="#i-gear"/></svg><svg class="ic cart" width="18" height="16" viewBox="0 0 18 16"><use href="#i-cart"/></svg><svg class="ic r1" width="16" height="16" viewBox="0 0 16 16"><use href="#i-ball"/><text class="ti" x="0" y="11.8" transform="translate(8.05 0) scale(1.4 1)">i</text></svg></div><div class="td c1"></div><div class="td c2">9</div><div class="td c3">CH10576</div><div class="td c4">1</div><div class="td c5">CH10576</div><div class="td c6">BRACKET</div><div class="td c7"></div></div>
<div class="tr" style="top:341px"><div class="td c0"><svg class="ic gear" width="13" height="12" viewBox="0 0 13 12"><use href="#i-gear"/></svg><svg class="ic cart" width="18" height="16" viewBox="0 0 18 16"><use href="#i-cart"/></svg><svg class="ic r1" width="16" height="16" viewBox="0 0 16 16"><use href="#i-ball"/><text class="ti" x="0" y="11.8" transform="translate(8.05 0) scale(1.4 1)">i</text></svg></div><div class="td c1"></div><div class="td c2">10</div><div class="td c3">CH10577</div><div class="td c4">1</div><div class="td c5">CH10577</div><div class="td c6">BRACKET</div><div class="td c7"></div></div>
<svg class="logo" width="60" height="60" viewBox="874 527 60 60">
<g fill="none" stroke="#17569f" stroke-width="3">
<circle cx="903.1" cy="547" r="6.4"/><circle cx="919.5" cy="547" r="6.4"/><circle cx="903.1" cy="563.7" r="6.4"/><circle cx="919.5" cy="563.7" r="6.4"/>
<path d="M898.2 551.9 L908 542.1 M914.6 542.1 L924.4 551.9 M898.2 558.8 L908 568.6 M914.6 568.6 L924.4 558.8" stroke-width="2.7"/>
</g>
<path d="M894.6 555.35 L899.4 551.2 L899.4 559.5 Z M928 555.35 L923.2 551.2 L923.2 559.5 Z M911.3 538.4 L907.2 543.6 L915.4 543.6 Z M911.3 572.3 L907.2 567.1 L915.4 567.1 Z" fill="#17569f"/>
<text x="893" y="583.8" class="pk">Perkins</text>
<text x="928.6" y="578.6" class="pkr">®</text>
</svg>
</div>
</body></html>
